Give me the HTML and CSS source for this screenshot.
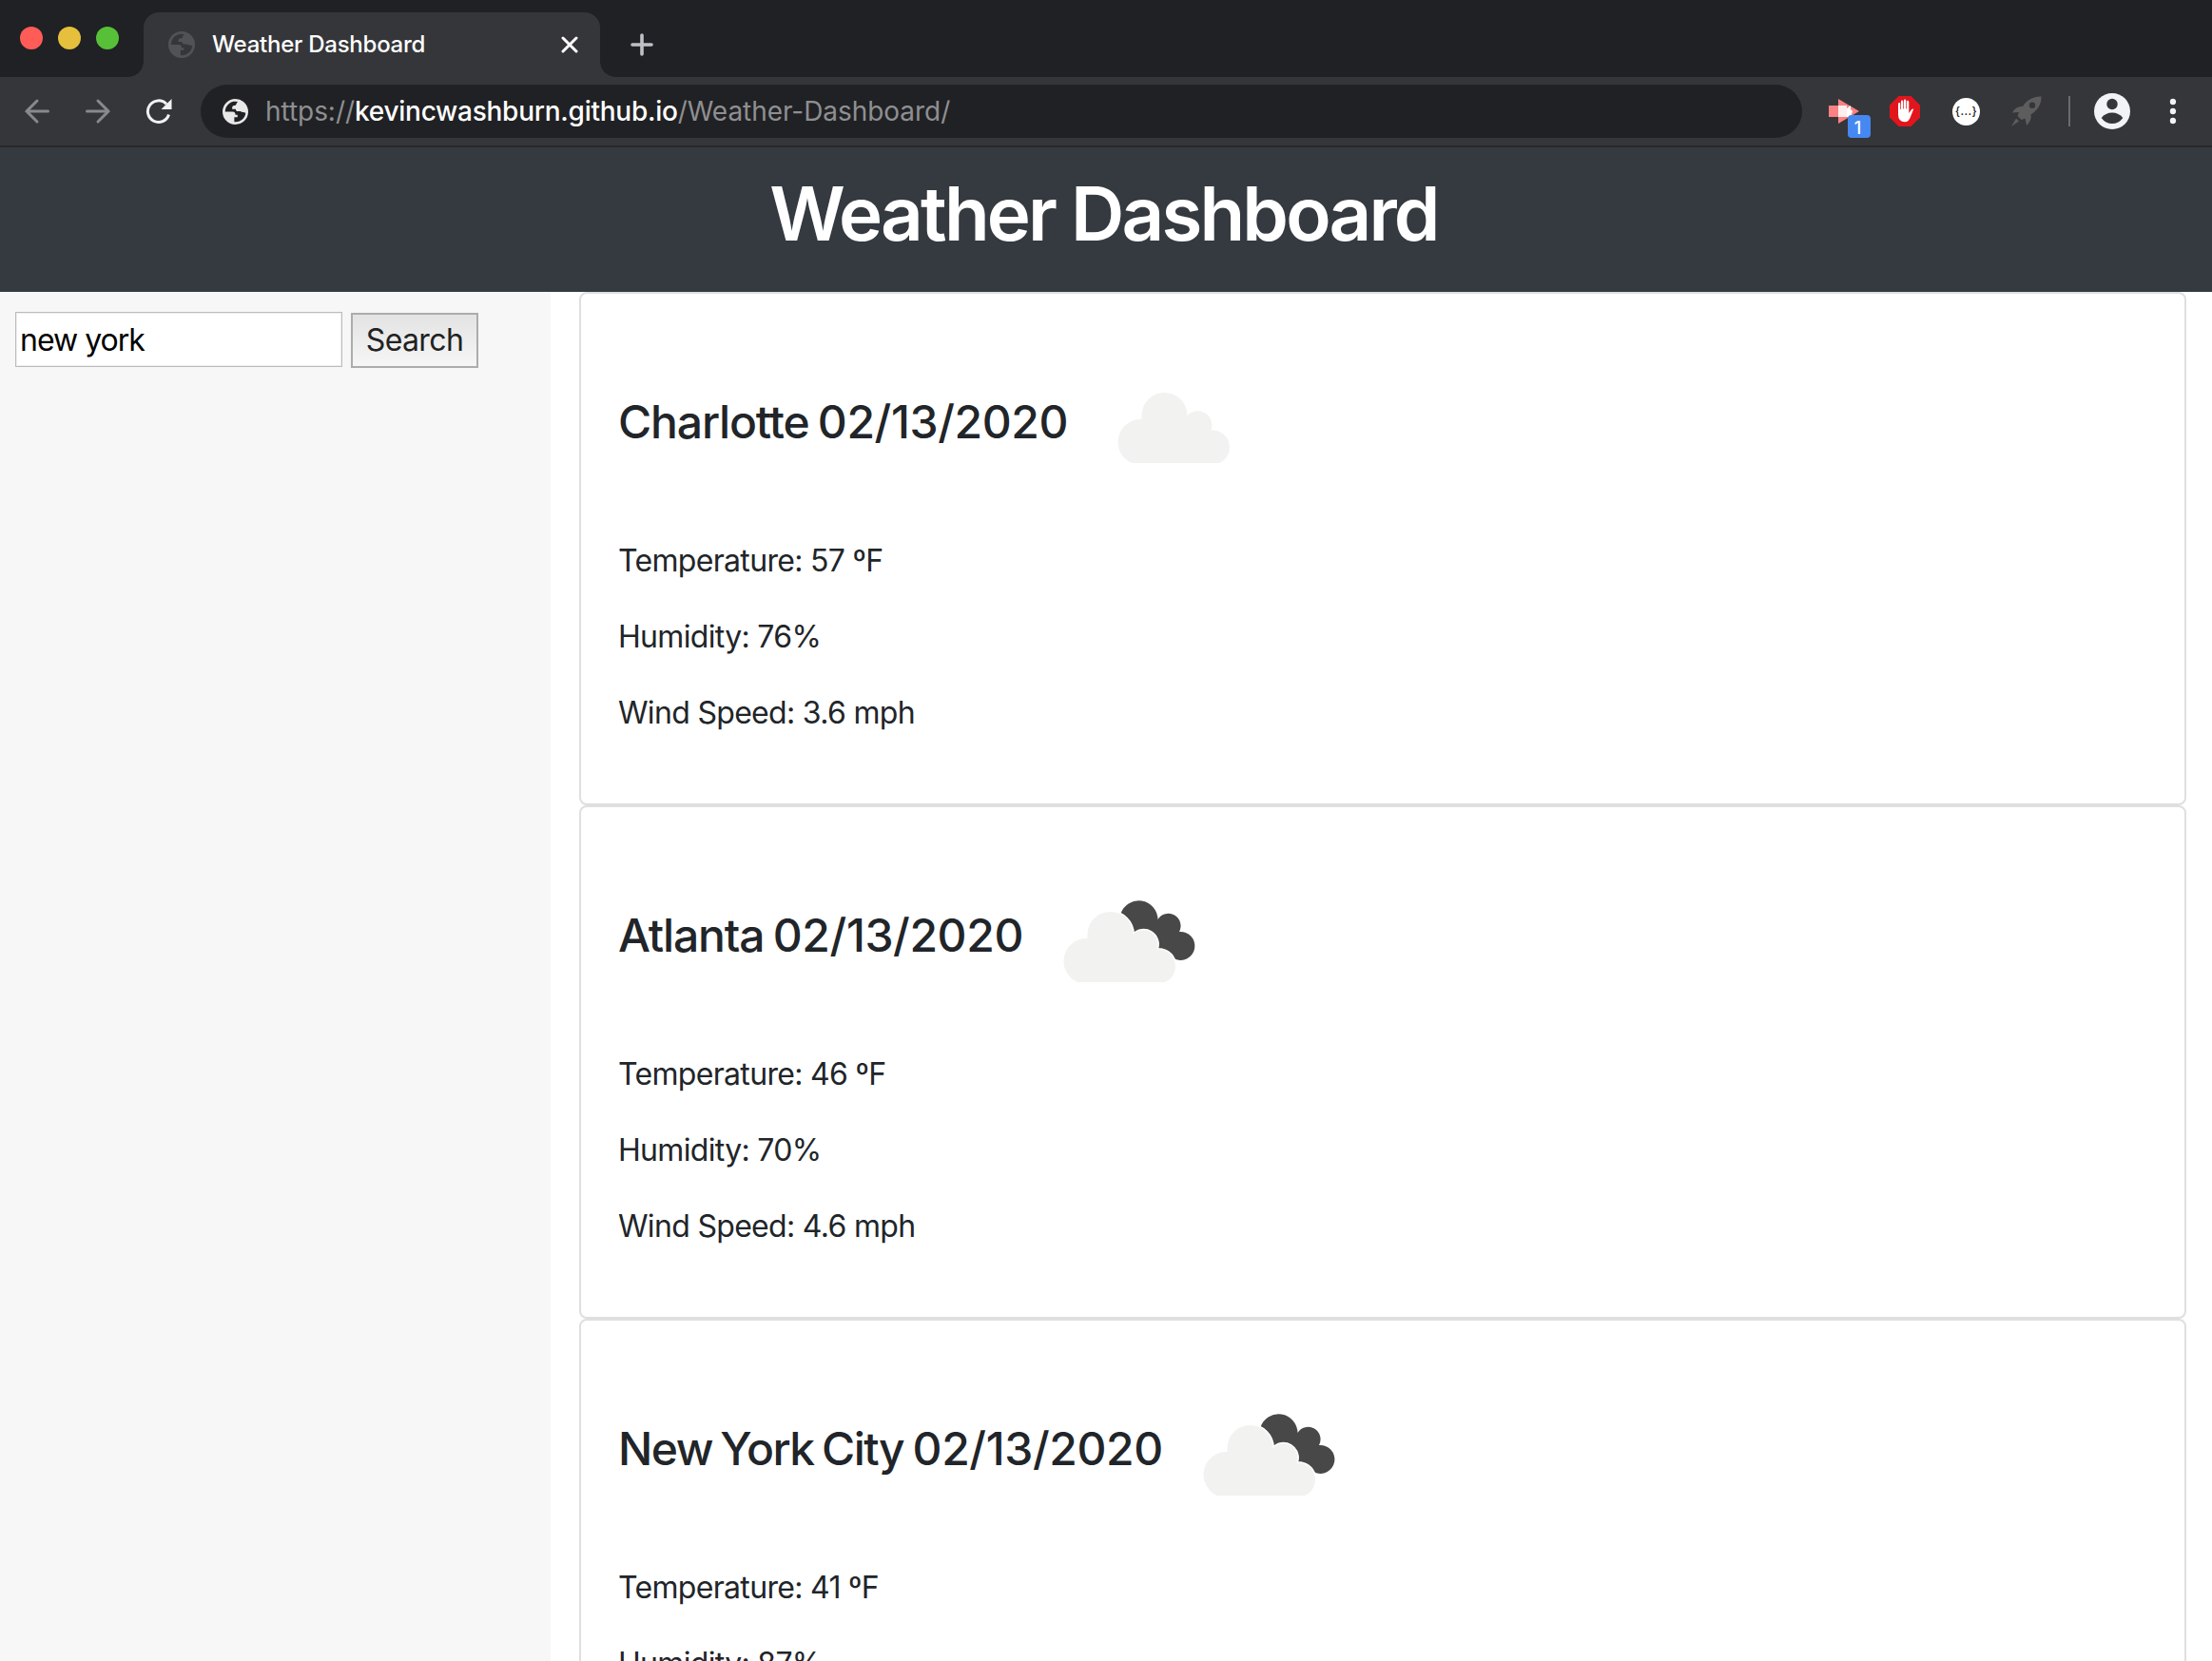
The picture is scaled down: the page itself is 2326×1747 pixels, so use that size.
FILE: index.html
```html
<!DOCTYPE html>
<html lang="en">
<head>
<meta charset="utf-8">
<title>Weather Dashboard</title>
<link rel="stylesheet" href="styles.css">
</head>
<body>
<svg class="defs" aria-hidden="true">
  <symbol id="globe" viewBox="0 0 24 24">
    <path fill-rule="evenodd" d="M12 0a12 12 0 1 0 0 24a12 12 0 0 0 0-24zM2.400 12H9.500C11.500 12 12 13.200 12 14.800H14V17H11V21.600A9.600 9.600 0 0 0 21.600 13L19.500 12.500C17.500 12.500 17.500 11.300 16 11.500C13 12 12.500 11 12.300 9.500H9C9 6 10 6.500 11.500 6.200C13.500 6 12.500 3.500 14.500 2.700A9.600 9.600 0 0 0 2.400 12z"/>
  </symbol>
  <symbol id="cloud" viewBox="0 0 200 200">
    <path d="M56 138A24 24 0 0 1 66.500 92V88A24 24 0 1 1 114.500 88A15 15 0 0 1 139.500 103.500A18 18 0 0 1 148 138Z"/>
  </symbol>
  <symbol id="broken-clouds" viewBox="0 0 200 200">
    <path fill="#484848" d="M91.500 72A20 20 0 0 1 130.500 78A13 13 0 0 1 153 91A15 15 0 1 1 148 119.500L110 100Z"/>
    <path fill="#f2f2f0" stroke="#fff" stroke-width="3" paint-order="stroke" d="M46 144A24 24 0 0 1 56.500 98V94A24 24 0 1 1 104.500 94A15 15 0 0 1 129.500 109.500A18 18 0 0 1 138 144Z"/>
  </symbol>
</svg>

<div class="tabstrip">
  <div class="lights"><i class="light red"></i><i class="light yellow"></i><i class="light green"></i></div>
  <div class="tab">
    <svg class="favicon"><use href="#globe"/></svg>
    <span class="tab-title">Weather Dashboard</span>
    <svg class="close" viewBox="0 0 18 18"><path d="M2 2L16 16M16 2L2 16"/></svg>
  </div>
  <svg class="new-tab" viewBox="0 0 24 24"><path d="M12 2V22M2 12H22"/></svg>
</div>

<div class="toolbar">
  <svg class="nav" viewBox="0 0 28 28"><path d="M25.500 14H3M14 3L3 14L14 25"/></svg>
  <svg class="nav" viewBox="0 0 28 28"><path d="M2.500 14H25M14 3L25 14L14 25"/></svg>
  <svg class="nav reload" viewBox="0 0 28 28"><path d="M24.500 17.500A11.300 11.300 0 1 1 22 6.500"/><path class="head" d="M27.500 1V12H16.500Z"/></svg>
  <div class="omnibox">
    <svg class="site"><use href="#globe"/></svg>
    <span class="url">https://<b>kevincwashburn.github.io</b>/Weather-Dashboard/</span>
  </div>
  <div class="ext arrow">
    <svg width="32" height="26" viewBox="0 0 32 26"><path fill="#fc8182" d="M0 7H10V0L32 13L10 26V19H0Z"/><path fill="#fff" d="M10 7H19V10L23 7V11L25 13L23 19H10Z"/><path fill="#fdd" d="M10 7H19V19H10Z" opacity=".5"/></svg>
    <span class="badge">1</span>
  </div>
  <svg class="ext block" viewBox="0 0 32 32"><path fill="#e2151d" d="M9.500 0H22.500L32 9.500V22.500L22.500 32H9.500L0 22.500V9.500Z"/><path fill="#fff" d="M9 17V8.500q0-1.400 1.100-1.400t1.100 1.400V14h.7V6q0-1.400 1.100-1.400t1.200 1.400v7.500h.7V5q0-1.400 1.200-1.400T17.300 5v8.500h.7V6.200q0-1.400 1.100-1.400t1.200 1.400V18l2.500-3.600q1.300-1.200 2.400-.6L21.500 23q-1.700 4.200-5.500 4.200q-7 0-7-8Z"/></svg>
  <div class="ext json">{...}</div>
  <svg class="ext rocket" viewBox="0 0 32 32"><path fill="#5d5d5d" fill-rule="evenodd" d="M31.500.5Q21 0 14 8L12 11Q5 10 1 17.500L8 17L6.500 21L10.500 25L14.500 23.500L16 31Q22 25 20.500 19.500L24 17Q32 10 31.500.5ZM22 6.500a3.200 3.200 0 1 1 0 6.400a3.200 3.200 0 0 1 0-6.400ZM5 23.500L8 26.500L0 32Z"/></svg>
  <i class="divider"></i>
  <svg class="avatar" viewBox="0 0 38 38"><circle cx="19" cy="19" r="19" fill="#f1f3f4"/><circle cx="19" cy="11.500" r="5.700" fill="#35363a"/><path fill="#35363a" d="M7.700 26Q12 20.500 19 20.500T30.300 26Q26 32 19 32T7.700 26Z"/></svg>
  <svg class="menu" viewBox="0 0 8 28"><circle cx="4" cy="4" r="3.200"/><circle cx="4" cy="14" r="3.200"/><circle cx="4" cy="24" r="3.200"/></svg>
</div>

<header class="header"><h1>Weather Dashboard</h1></header>

<main class="layout">
  <aside class="sidebar">
    <input class="query" type="text" value="new york">
    <button class="search">Search</button>
  </aside>
  <section class="cards">
    <article class="card">
      <div class="card-head"><h3><span class="city">Charlotte</span> 02/13/2020</h3><svg class="weather few"><use href="#cloud"/></svg></div>
      <p>Temperature: 57 ºF</p><p>Humidity: 76%</p><p>Wind Speed: 3.6 mph</p>
    </article>
    <article class="card">
      <div class="card-head"><h3><span class="city">Atlanta</span> 02/13/2020</h3><svg class="weather"><use href="#broken-clouds"/></svg></div>
      <p>Temperature: 46 ºF</p><p>Humidity: 70%</p><p>Wind Speed: 4.6 mph</p>
    </article>
    <article class="card">
      <div class="card-head"><h3><span class="city long">New York City</span> 02/13/2020</h3><svg class="weather"><use href="#broken-clouds"/></svg></div>
      <p>Temperature: 41 ºF</p><p>Humidity: 87%</p>
    </article>
  </section>
</main>
</body>
</html>
```
FILE: styles.css
```css
* { box-sizing: border-box; }
body {
  margin: 0;
  height: 1747px;
  overflow: hidden;
  display: flex;
  flex-direction: column;
  font-family: Inter, "Liberation Sans", sans-serif;
  color: #212529;
  background: #fff;
}
svg { display: block; flex: none; }
h1, h3, p { margin: 0; white-space: nowrap; }
.defs { position: absolute; width: 0; height: 0; }

/* tab strip */
.tabstrip { flex: none; height: 81px; background: #202124; display: flex; align-items: flex-start; }
.lights { display: flex; gap: 16px; padding: 28px 0 0 21px; width: 151px; }
.light { width: 24px; height: 24px; border-radius: 50%; }
.red { background: #ff5c58; }
.yellow { background: #e6bf3c; }
.green { background: #57c038; }
.tab {
  position: relative;
  width: 480px; height: 68px; margin-top: 13px; padding: 0 23px 0 26px;
  display: flex; align-items: center;
  background: #35363a; border-radius: 16px 16px 0 0;
}
.tab::before, .tab::after { content: ""; position: absolute; bottom: 0; width: 16px; height: 16px; }
.tab::before { left: -16px; background: radial-gradient(circle at 0 0, transparent 15.5px, #35363a 16px); }
.tab::after { right: -16px; background: radial-gradient(circle at 100% 0, transparent 15.5px, #35363a 16px); }
.favicon { width: 28px; height: 28px; fill: #505356; }
.tab-title { margin-left: 18px; padding-bottom: 2px; font-size: 24px; font-weight: 500; color: #fff; letter-spacing: -.25px; }
.close { width: 18px; height: 18px; margin-left: auto; fill: none; stroke: #fff; stroke-width: 3; stroke-linecap: round; }
.new-tab { width: 24px; height: 24px; margin: 35px 0 0 32px; fill: none; stroke: #bdc1c6; stroke-width: 3.6; stroke-linecap: round; }

/* toolbar */
.toolbar {
  flex: none; height: 74px; padding: 0 37px 0 25px;
  display: flex; align-items: center;
  background: #35363a; border-bottom: 2px solid #282828;
}
.nav { width: 28px; height: 28px; margin-right: 36px; fill: none; stroke: #89898b; stroke-width: 3; stroke-linecap: round; }
.reload { margin-right: 30px; stroke: #f1f1f1; stroke-linecap: butt; }
.reload .head { fill: #f1f1f1; stroke: none; }
.omnibox {
  width: 1684px; height: 56px; padding-left: 23px;
  display: flex; align-items: center;
  background: #202124; border-radius: 28px;
}
.site { width: 27px; height: 27px; fill: #e8e8e8; }
.url { margin-left: 18px; font-size: 28px; color: #8f8f91; white-space: nowrap; letter-spacing: -.05px; }
.url b { font-weight: 500; color: #fff; letter-spacing: -.25px; }
.arrow { position: relative; width: 32px; margin-left: 28px; }
.badge {
  position: absolute; left: 20px; top: 17px; width: 24px; height: 24px;
  border-radius: 4px; background: #4688f1; color: #fff;
  font-size: 18px; font-weight: 500; line-height: 27px; text-align: center; padding-right: 3px;
}
.block { width: 32px; height: 32px; margin-left: 32px; }
.json {
  width: 29px; height: 29px; margin-left: 34px; border-radius: 50%;
  background: #fff; color: #222; font-size: 12px; font-weight: 500; line-height: 27px; text-align: center; letter-spacing: .4px;
}
.rocket { width: 32px; height: 32px; margin-left: 33px; }
.divider { width: 2px; height: 32px; margin-left: 28px; background: #6a6b6e; }
.avatar { width: 38px; height: 38px; margin-left: 25px; }
.menu { width: 8px; height: 28px; margin-left: auto; fill: #f1f3f4; }

/* page */
.header { flex: none; height: 152px; background: #343a40; display: flex; justify-content: center; }
.header h1 { font-size: 78px; font-weight: 600; line-height: 96px; margin: 22px 5px 0 0; color: #fff; letter-spacing: -2.85px; }
.layout { flex: 1; min-height: 0; display: flex; align-items: stretch; }
.sidebar { width: 579px; background: #f7f7f7; padding: 21px 0 0 16px; display: flex; align-items: flex-start; gap: 9px; }
.query {
  width: 344px; height: 58px; padding: 0 4px 0 4px; border: 1px solid #bcbcbc;
  box-shadow: inset 0 0 0 1px #eee; background: #fff;
  font: 400 32px Inter, sans-serif; color: #000; letter-spacing: -1px;
}
.search {
  width: 134px; height: 58px; margin-top: 1px; padding: 0 0 2px; border: 2px solid #acacac; border-radius: 0;
  background: linear-gradient(#e3e3e3, #f6f6f6);
  font: 400 32px Inter, sans-serif; color: #222; letter-spacing: -.6px;
}
.cards { width: 1690px; margin-left: 30px; }
.card { height: 540px; padding: 40px 39px; border: 2px solid #dfdfdf; border-radius: 8px; background: #fff; }
.card-head { display: flex; align-items: center; height: 200px; margin-bottom: 17px; gap: 11px; }
.card h3 { font-size: 48px; font-weight: 500; line-height: 58px; padding-bottom: 10px; letter-spacing: -.4px; word-spacing: -3px; }
.card .city { letter-spacing: -1.15px; }
.card .long { letter-spacing: -1.5px; }
.weather { width: 200px; height: 200px; }
.few { fill: #f2f2f0; }
.card p { font-size: 32px; line-height: 48px; margin-bottom: 32px; letter-spacing: -.68px; }
```
